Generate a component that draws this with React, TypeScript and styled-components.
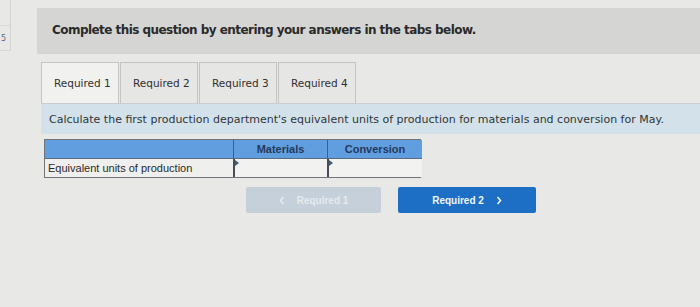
import React from "react";
import styled, { createGlobalStyle } from "styled-components";

const Global = createGlobalStyle`
  html, body { margin: 0; padding: 0; }
  body {
    width: 700px;
    height: 307px;
    overflow: hidden;
    background: #e8e8e6;
    font-family: "DejaVu Sans", Verdana, sans-serif;
  }
`;

const Page = styled.div`
  display: flex;
  width: 700px;
  height: 307px;
`;

const Side = styled.div`
  width: 11px;
  flex: none;
  display: flex;
  flex-direction: column;
`;

const SideTop = styled.div`
  height: 25px;
  border-right: 1px solid #d2d2d0;
  border-bottom: 1px solid #d8d8d6;
`;

const SideCell = styled.div`
  height: 24px;
  border-right: 1px solid #d2d2d0;
  border-bottom: 1px solid #d8d8d6;
  font-size: 8px;
  color: #5a6a80;
  display: flex;
  align-items: center;
  padding-left: 1px;
`;

const Main = styled.div`
  flex: 1;
  padding-top: 8px;
  padding-left: 26px;
  display: flex;
  flex-direction: column;
`;

const Header = styled.div`
  height: 46px;
  background: #d5d5d4;
  display: flex;
  align-items: center;
  padding-left: 15px;
  font-weight: bold;
  font-size: 12px;
  letter-spacing: -0.55px;
  color: #2a2a2a;
  padding-bottom: 2px;
  box-sizing: border-box;
`;

const Body = styled.div`
  margin-left: 4px;
  padding-top: 8px;
  display: flex;
  flex-direction: column;
`;

const Tabs = styled.div`
  display: flex;
  height: 41px;
  border-bottom: 1px solid #c9cdd0;
`;

const Tab = styled.div<{ $active?: boolean }>`
  width: 78px;
  box-sizing: border-box;
  border: 1px solid #c4c4c2;
  border-bottom: none;
  margin-right: 1px;
  background: ${(p) => (p.$active ? "#f1f1ef" : "#e6e6e4")};
  display: flex;
  align-items: center;
  padding-left: 12px;
  font-size: 10.5px;
  color: #303030;
`;

const Prompt = styled.div`
  height: 30px;
  background: #d3e2ea;
  display: flex;
  align-items: center;
  padding-left: 8px;
  font-size: 11px;
  color: #303538;
`;

const Table = styled.div`
  margin-top: 5px;
  margin-left: 3px;
  width: 377px;
  display: grid;
  grid-template-columns: 188px 94px 95px;
  border: 1px solid #707478;
  box-sizing: border-box;
`;

const HeadCell = styled.div<{ $divider?: boolean }>`
  height: 18px;
  background: #609ee0;
  border-left: ${(p) => (p.$divider ? "1px solid #485c78" : "none")};
  border-bottom: 1px solid #5a6c84;
  display: flex;
  align-items: center;
  justify-content: center;
  font-family: "Liberation Sans", Arial, sans-serif;
  font-weight: bold;
  font-size: 11px;
  color: #253a5c;
`;

const LabelCell = styled.div`
  height: 18px;
  background: #efefed;
  display: flex;
  align-items: center;
  padding-left: 3px;
  font-family: "Liberation Sans", Arial, sans-serif;
  font-size: 11px;
  color: #2a2a2a;
`;

const InputCell = styled.div`
  position: relative;
  height: 18px;
  background: #f2f2f0;
  border-left: 2px solid #4a4e54;
  box-sizing: border-box;
  &::before {
    content: "";
    position: absolute;
    left: 0;
    top: 1px;
    border-top: 3px solid transparent;
    border-bottom: 3px solid transparent;
    border-left: 4px solid #3b5a90;
  }
`;

const Nav = styled.div`
  display: flex;
  gap: 17px;
  margin-left: 205px;
  margin-top: 9px;
`;

const NavButton = styled.div<{ $primary?: boolean }>`
  width: ${(p) => (p.$primary ? "138px" : "135px")};
  height: 26px;
  border-radius: 2px;
  background: ${(p) => (p.$primary ? "#1d6ec5" : "#c6d0da")};
  color: ${(p) => (p.$primary ? "#f2f6fb" : "#e4eaf0")};
  display: flex;
  align-items: center;
  justify-content: center;
  gap: 12px;
  font-family: "Liberation Sans", Arial, sans-serif;
  font-weight: bold;
  font-size: 10px;
`;

const Chevron = ({ dir }: { dir: "left" | "right" }) => (
  <svg width="6" height="9" viewBox="0 0 6 9">
    <path
      d={dir === "left" ? "M4.5 1 L1.5 4.5 L4.5 8" : "M1.5 1 L4.5 4.5 L1.5 8"}
      fill="none"
      stroke="currentColor"
      strokeWidth="1.6"
    />
  </svg>
);

export default function App() {
  return (
    <>
      <Global />
      <Page>
        <Side>
          <SideTop />
          <SideCell>5</SideCell>
        </Side>
        <Main>
          <Header>Complete this question by entering your answers in the tabs below.</Header>
          <Body>
            <Tabs>
              <Tab $active>Required 1</Tab>
              <Tab>Required 2</Tab>
              <Tab>Required 3</Tab>
              <Tab>Required 4</Tab>
            </Tabs>
            <Prompt>
              Calculate the first production department's equivalent units of production for materials and conversion for May.
            </Prompt>
            <Table>
              <HeadCell />
              <HeadCell $divider>Materials</HeadCell>
              <HeadCell $divider>Conversion</HeadCell>
              <LabelCell>Equivalent units of production</LabelCell>
              <InputCell />
              <InputCell />
            </Table>
            <Nav>
              <NavButton>
                <Chevron dir="left" />
                Required 1
              </NavButton>
              <NavButton $primary>
                Required 2
                <Chevron dir="right" />
              </NavButton>
            </Nav>
          </Body>
        </Main>
      </Page>
    </>
  );
}
